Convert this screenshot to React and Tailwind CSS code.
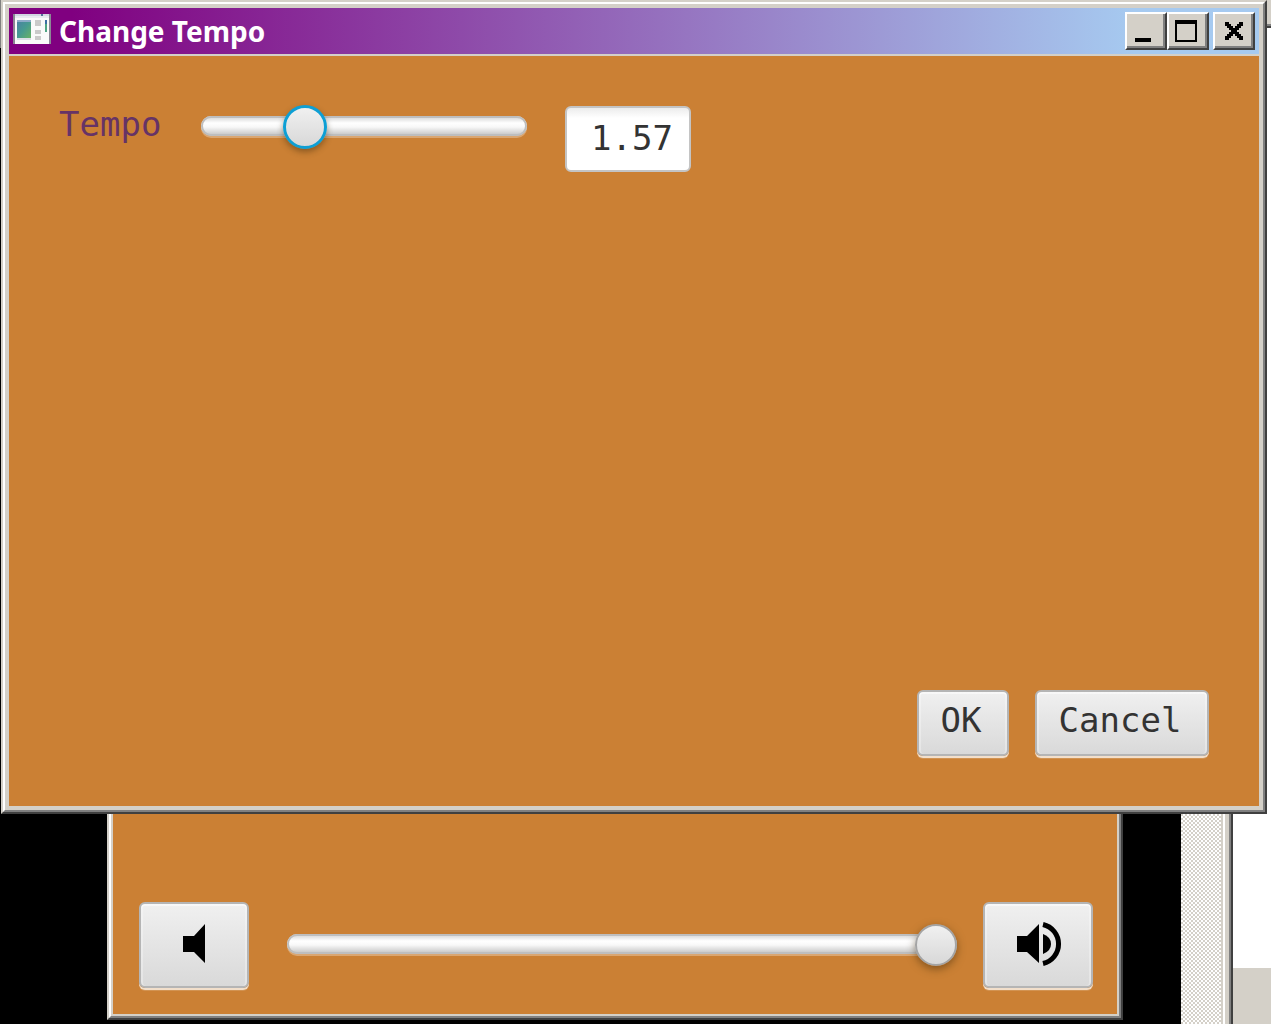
import React, { useState } from "react";

function CaptionButton({ label, children }) {
  return (
    <button
      type="button"
      aria-label={label}
      className="flex h-[38px] w-[42px] items-center justify-center border-2 border-t-white border-l-white border-r-[#404040] border-b-[#404040] bg-[#d4d0c8] shadow-[inset_-2px_-2px_0_#808080]"
    >
      <svg width="38" height="34" viewBox="0 0 38 34" shapeRendering="crispEdges" aria-hidden="true">
        {children}
      </svg>
    </button>
  );
}

function PushButton({ className, children, ...rest }) {
  return (
    <button
      type="button"
      className={
        "rounded-md border-2 border-[#b5b5b5] bg-[linear-gradient(#f0f0f0,#d9d9d9)] text-[#333] shadow-[0_2px_0_rgba(255,255,255,0.7),0_3px_0_rgba(255,255,255,0.15),inset_0_2px_0_rgba(255,255,255,0.5),inset_2px_0_0_rgba(255,255,255,0.3),inset_-2px_0_0_rgba(255,255,255,0.3)] " +
        className
      }
      {...rest}
    >
      {children}
    </button>
  );
}

const track =
  "appearance-none bg-transparent outline-none " +
  "[&::-webkit-slider-runnable-track]:h-5 [&::-webkit-slider-runnable-track]:rounded-full [&::-webkit-slider-runnable-track]:bg-[linear-gradient(#dddddd_2px,#ffffff_35%,#f8f8f8_55%,#cccccc_18px)] [&::-webkit-slider-runnable-track]:shadow-[inset_0_0_0_2px_#bebebe,0_2px_0_rgba(255,255,255,0.3)] " +
  "[&::-webkit-slider-thumb]:appearance-none [&::-webkit-slider-thumb]:rounded-full [&::-webkit-slider-thumb]:bg-[linear-gradient(#f0f0f0,#d8d8d8)] [&::-webkit-slider-thumb]:border-solid ";

const focusedThumb =
  "[&::-webkit-slider-thumb]:-mt-[11px] [&::-webkit-slider-thumb]:size-11 [&::-webkit-slider-thumb]:border-3 [&::-webkit-slider-thumb]:border-[#0e9fd4] [&::-webkit-slider-thumb]:shadow-[0_3px_6px_rgba(60,40,10,0.45)]";

const plainThumb =
  "[&::-webkit-slider-thumb]:-mt-[10px] [&::-webkit-slider-thumb]:size-[42px] [&::-webkit-slider-thumb]:border-2 [&::-webkit-slider-thumb]:border-[#a4a4a4] [&::-webkit-slider-thumb]:shadow-[0_3px_8px_rgba(60,40,10,0.5)]";

function AppIcon() {
  return (
    <svg width="38" height="34" viewBox="0 2 38 34" aria-hidden="true">
      <defs>
        <linearGradient id="appPane" x1="0" y1="0" x2="1" y2="1">
          <stop offset="0" stopColor="#4a7fa5" />
          <stop offset="0.5" stopColor="#469a90" />
          <stop offset="1" stopColor="#68b265" />
        </linearGradient>
      </defs>
      <g shapeRendering="crispEdges">
        <path d="M0 2H38V32H0Z" fill="#8b8795" />
        <path d="M2 2H36V32H2Z" fill="#fafafa" />
        <path d="M2 2H36V4H2Z" fill="#d1d7e1" />
        <path d="M2 4H36V6H2Z" fill="#e8ebf0" />
        <path d="M28 2H30V4H28Z" fill="#54719b" />
        <path d="M4 8H18V26H4Z" fill="url(#appPane)" />
        <path d="M4 8H18V10H4Z" fill="#8caac8" />
        <path d="M4 26H18V28H4Z" fill="#dcdfe6" />
        <path d="M22 8H28V14H22ZM22 18H28V22H22ZM22 24H28V28H22Z" fill="#cacaca" />
        <path d="M32 8H34V12H32Z" fill="#3c6fa4" />
        <path d="M32 12H34V20H32Z" fill="#4fa583" />
      </g>
    </svg>
  );
}

function PlayerWindow() {
  const [volume, setVolume] = useState(100);
  return (
    <section
      aria-label="Player"
      className="absolute right-[148px] bottom-1 left-[107px] border-2 border-t-[#d4d0c8] border-r-[#404040] border-b-[#404040] border-l-[#d4d0c8]"
    >
      <div className="border-2 border-t-white border-r-[#808080] border-b-[#808080] border-l-white">
        <div className="flex h-[400px] items-end border-2 border-[#d4d0c8] bg-[#cb8034] pr-6 pb-[26px] pl-[26px]">
          <PushButton aria-label="Mute" className="flex h-[86px] w-[110px] items-center justify-center">
            <svg width="60" height="60" viewBox="0 0 60 60" aria-hidden="true">
              <path d="M19 21H30L41 9V48L30 37H19Z" fill="#000" />
            </svg>
          </PushButton>
          <input
            type="range"
            aria-label="Volume"
            min="0"
            max="100"
            value={volume}
            onChange={(e) => setVolume(e.target.value)}
            className={track + plainThumb + " mr-[26px] mb-[34px] ml-[38px] h-5 min-w-0 flex-1"}
          />
          <PushButton aria-label="Full volume" className="flex h-[86px] w-[110px] items-center justify-center">
            <svg width="60" height="60" viewBox="0 0 60 60" aria-hidden="true">
              <path d="M9 21H19L31 9V48L19 37H9Z" fill="#000" />
              <path d="M35 19Q43 22 43 29Q43 36 35 39Z" fill="#000" />
              <path d="M35 9.5A20 20 0 0 1 35 48.5" fill="none" stroke="#000" strokeWidth="5" />
            </svg>
          </PushButton>
        </div>
      </div>
    </section>
  );
}

function TempoDialog() {
  const [tempo, setTempo] = useState("1.57");
  return (
    <section
      role="dialog"
      aria-label="Change Tempo"
      className="absolute top-0 right-1 left-px border-2 border-t-[#d4d0c8] border-r-[#404040] border-b-[#404040] border-l-[#d4d0c8]"
    >
      <div className="border-2 border-t-white border-r-[#808080] border-b-[#808080] border-l-white">
        <div className="border-4 border-[#d4d0c8] bg-[#d4d0c8]">
          <header className="flex h-[46px] items-center bg-[linear-gradient(to_right,#800080_5%,#a6caf0_90%)] pr-1 pl-1">
            <AppIcon />
            <h1 className="ml-2 flex-1 font-['Noto_Sans',sans-serif] text-[28px] leading-8 font-bold text-white">Change Tempo</h1>
            <CaptionButton label="Minimize">
              <path d="M8 24H24V28H8Z" fill="#000" />
            </CaptionButton>
            <CaptionButton label="Maximize">
              <path fillRule="evenodd" d="M6 6H28V28H6ZM8 10V26H26V10Z" fill="#000" />
            </CaptionButton>
            <div className="ml-1 flex">
              <CaptionButton label="Close">
                <path
                  d="M10 8H14V10H16V12H18V14H20V12H22V10H24V8H28V12H26V14H24V16H22V18H24V20H26V22H28V26H24V24H22V22H20V20H18V22H16V24H14V26H10V22H12V20H14V18H16V16H14V14H12V12H10Z"
                  fill="#000"
                />
              </CaptionButton>
            </div>
          </header>
          <form
            onSubmit={(e) => e.preventDefault()}
            className="mt-0.5 flex h-[750px] flex-col justify-between bg-[#cb8034] p-[50px] font-['DejaVu_Sans_Mono',monospace] text-[34px] leading-10"
          >
            <div className="flex items-start">
              <label htmlFor="tempo" className="-mt-0.5 w-[142px] text-[#663366]">
                Tempo
              </label>
              <input
                id="tempo"
                type="range"
                min="0.5"
                max="4.2"
                step="0.01"
                value={tempo}
                onChange={(e) => setTempo(Number(e.target.value).toFixed(2))}
                className={track + focusedThumb + " mt-[10px] h-5 w-[326px]"}
              />
              <input
                type="text"
                aria-label="Tempo value"
                value={tempo}
                onChange={(e) => setTempo(e.target.value)}
                className="ml-[38px] h-[66px] w-[126px] rounded-md border-2 border-[#c4c4c4] bg-[linear-gradient(#ececec,#ffffff_10px)] pr-4 pb-0.5 text-right text-[#333] outline-none"
              />
            </div>
            <div className="flex justify-end gap-[26px]">
              <PushButton className="h-[66px] w-[92px] pr-1 pb-1.5">OK</PushButton>
              <PushButton className="h-[66px] w-[174px] pr-1 pb-1.5">Cancel</PushButton>
            </div>
          </form>
        </div>
      </div>
    </section>
  );
}

export default function App() {
  return (
    <main className="relative flex h-screen overflow-hidden bg-black">
      <div className="absolute top-0 left-0 h-12 w-px bg-[#808080]" />
      <div className="ml-auto flex">
        <div className="w-10 bg-[repeating-conic-gradient(#d4d0c8_0_25%,#ffffff_0_50%)] bg-size-[4px_4px]" />
        <div className="w-0.5 bg-[#d4d0c8]" />
        <div className="w-0.5 bg-white" />
        <div className="w-1 bg-[#d4d0c8]" />
        <div className="w-0.5 bg-[#808080]" />
        <div className="w-0.5 bg-[#404040]" />
        <div className="flex w-[38px] flex-col bg-white">
          <div className="h-7 border-b-2 border-[#404040] bg-[#d4d0c8] shadow-[inset_0_-2px_0_#808080]" />
          <div className="mt-auto h-14 bg-[#d4d0c8]" />
        </div>
      </div>
      <PlayerWindow />
      <TempoDialog />
    </main>
  );
}
